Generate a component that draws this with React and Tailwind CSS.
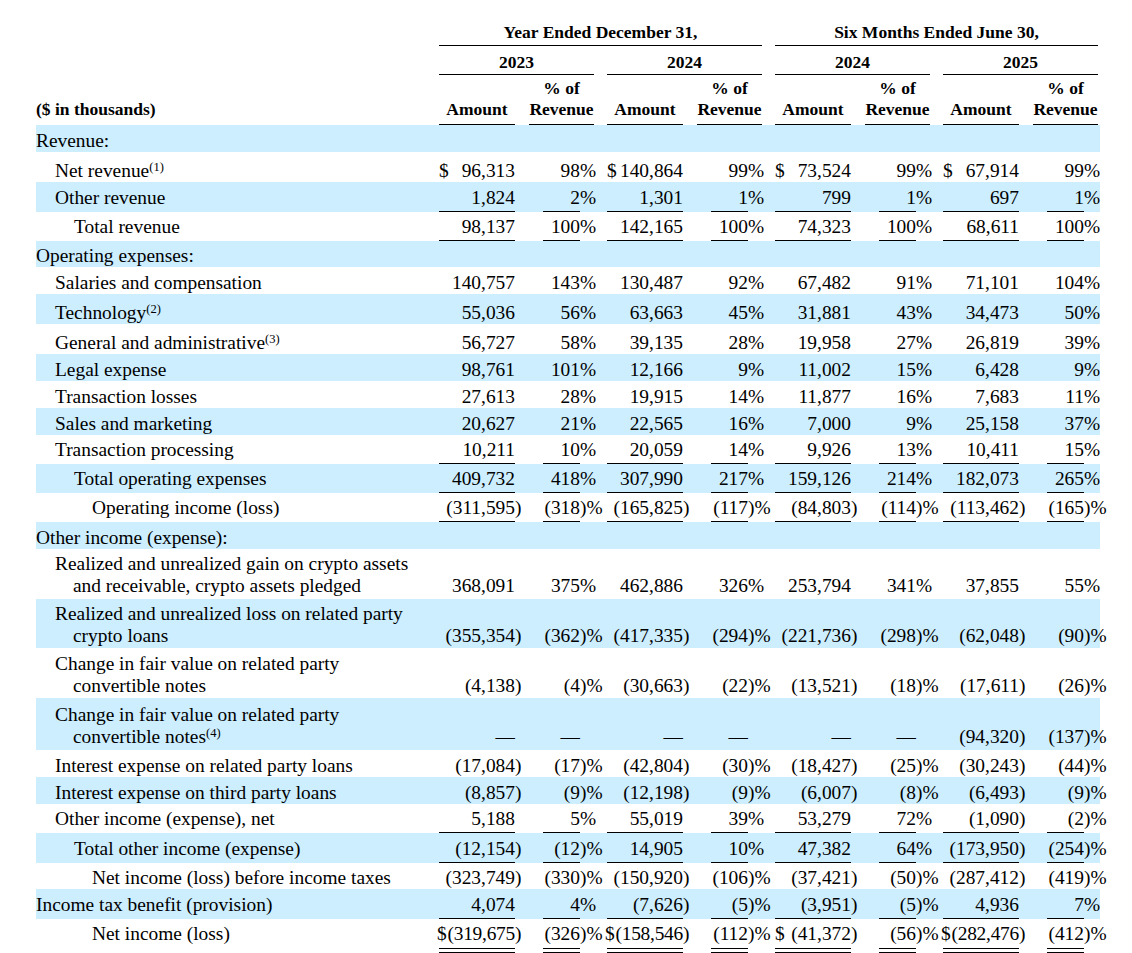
import React from "react";

const FONT = "font-['Liberation_Serif','Times_New_Roman',serif]";

const rows = [
  { label: ["Revenue:"], ind: 0, h: "h-[27px]", bg: true },
  { label: ["Net revenue"], sup: "(1)", ind: 1, h: "h-[30px]", v: ["$ 96,313", "98%", "$ 140,864", "99%", "$ 73,524", "99%", "$ 67,914", "99%"] },
  { label: ["Other revenue"], ind: 1, h: "h-[30px]", bg: true, ul: "s", v: ["1,824", "2%", "1,301", "1%", "799", "1%", "697", "1%"] },
  { label: ["Total revenue"], ind: 2, h: "h-[29px]", ul: "s", v: ["98,137", "100%", "142,165", "100%", "74,323", "100%", "68,611", "100%"] },
  { label: ["Operating expenses:"], ind: 0, h: "h-[26px]", bg: true },
  { label: ["Salaries and compensation"], ind: 1, h: "h-[27px]", v: ["140,757", "143%", "130,487", "92%", "67,482", "91%", "71,101", "104%"] },
  { label: ["Technology"], sup: "(2)", ind: 1, h: "h-[30px]", bg: true, v: ["55,036", "56%", "63,663", "45%", "31,881", "43%", "34,473", "50%"] },
  { label: ["General and administrative"], sup: "(3)", ind: 1, h: "h-[30px]", v: ["56,727", "58%", "39,135", "28%", "19,958", "27%", "26,819", "39%"] },
  { label: ["Legal expense"], ind: 1, h: "h-[27px]", bg: true, v: ["98,761", "101%", "12,166", "9%", "11,002", "15%", "6,428", "9%"] },
  { label: ["Transaction losses"], ind: 1, h: "h-[27px]", v: ["27,613", "28%", "19,915", "14%", "11,877", "16%", "7,683", "11%"] },
  { label: ["Sales and marketing"], ind: 1, h: "h-[27px]", bg: true, v: ["20,627", "21%", "22,565", "16%", "7,000", "9%", "25,158", "37%"] },
  { label: ["Transaction processing"], ind: 1, h: "h-[29px]", ul: "s", v: ["10,211", "10%", "20,059", "14%", "9,926", "13%", "10,411", "15%"] },
  { label: ["Total operating expenses"], ind: 2, h: "h-[29px]", bg: true, ul: "s", v: ["409,732", "418%", "307,990", "217%", "159,126", "214%", "182,073", "265%"] },
  { label: ["Operating income (loss)"], ind: 3, h: "h-[29px]", ul: "s", v: ["(311,595)", "(318)%", "(165,825)", "(117)%", "(84,803)", "(114)%", "(113,462)", "(165)%"] },
  { label: ["Other income (expense):"], ind: 0, h: "h-[27px]", bg: true },
  { label: ["Realized and unrealized gain on crypto assets", "and receivable, crypto assets pledged"], ind: 1, h: "h-[50px]", pb: 2, v: ["368,091", "375%", "462,886", "326%", "253,794", "341%", "37,855", "55%"] },
  { label: ["Realized and unrealized loss on related party", "crypto loans"], ind: 1, h: "h-[49px]", pb: 1, bg: true, v: ["(355,354)", "(362)%", "(417,335)", "(294)%", "(221,736)", "(298)%", "(62,048)", "(90)%"] },
  { label: ["Change in fair value on related party", "convertible notes"], ind: 1, h: "h-[50px]", pb: 1, v: ["(4,138)", "(4)%", "(30,663)", "(22)%", "(13,521)", "(18)%", "(17,611)", "(26)%"] },
  { label: ["Change in fair value on related party", "convertible notes"], sup: "(4)", ind: 1, h: "h-[52px]", pb: 2, bg: true, v: ["—", "—", "—", "—", "—", "—", "(94,320)", "(137)%"] },
  { label: ["Interest expense on related party loans"], ind: 1, h: "h-[27px]", v: ["(17,084)", "(17)%", "(42,804)", "(30)%", "(18,427)", "(25)%", "(30,243)", "(44)%"] },
  { label: ["Interest expense on third party loans"], ind: 1, h: "h-[27px]", bg: true, v: ["(8,857)", "(9)%", "(12,198)", "(9)%", "(6,007)", "(8)%", "(6,493)", "(9)%"] },
  { label: ["Other income (expense), net"], ind: 1, h: "h-[29px]", ul: "s", v: ["5,188", "5%", "55,019", "39%", "53,279", "72%", "(1,090)", "(2)%"] },
  { label: ["Total other income (expense)"], ind: 2, h: "h-[30px]", bg: true, ul: "s", v: ["(12,154)", "(12)%", "14,905", "10%", "47,382", "64%", "(173,950)", "(254)%"] },
  { label: ["Net income (loss) before income taxes"], ind: 3, h: "h-[26px]", v: ["(323,749)", "(330)%", "(150,920)", "(106)%", "(37,421)", "(50)%", "(287,412)", "(419)%"] },
  { label: ["Income tax benefit (provision)"], ind: 0, h: "h-[30px]", bg: true, ul: "s", v: ["4,074", "4%", "(7,626)", "(5)%", "(3,951)", "(5)%", "4,936", "7%"] },
  { label: ["Net income (loss)"], ind: 3, h: "h-[34px]", ul: "d", v: ["$(319,675)", "(326)%", "$(158,546)", "(112)%", "$ (41,372)", "(56)%", "$(282,476)", "(412)%"] },
];

const IND = ["pl-0", "pl-[19px]", "pl-[38px]", "pl-[56px]"];
const PB = { 0: "pb-0", 1: "pb-[1px]", 2: "pb-[2px]" };

function parseAmt(s) {
  let d = false;
  let tight = false;
  let t = s;
  if (t.startsWith("$")) {
    d = true;
    tight = t[1] === "(";
    t = t.slice(1).trim();
  }
  let sfx = "";
  if (t.endsWith(")")) {
    sfx = ")";
    t = t.slice(0, -1);
  }
  return { d, v: t, sfx, tight };
}

function parsePct(s) {
  if (s.endsWith(")%")) return { v: s.slice(0, -2), sfx: ")%" };
  if (s.endsWith("%")) return { v: s.slice(0, -1), sfx: "%" };
  return { v: s, sfx: "" };
}

function UlCell({ w, ul, plain, children }) {
  if (ul === "s") {
    return (
      <div className={`${w} shrink-0 border-b border-black pb-[2px] leading-[22px]`}>
        {children}
      </div>
    );
  }
  if (ul === "d") {
    return (
      <div className={`${w} shrink-0`}>
        <div className="border-b border-black pb-[3px] leading-[22px]">{children}</div>
        <div className="mt-[3px] h-px bg-black" />
      </div>
    );
  }
  return <div className={`${w} shrink-0 leading-[22px] ${plain}`}>{children}</div>;
}

function Period({ amt, pct, ul, plain, last }) {
  const a = parseAmt(amt);
  const p = parsePct(pct);
  return (
    <>
      <UlCell w="w-[76px]" ul={ul} plain={plain}>
        <div className="flex justify-between whitespace-nowrap">
          <span className={a.tight ? "w-[4px] -ml-[2px] overflow-visible" : "w-[6px] overflow-visible"}>
            {a.d ? "$" : ""}
          </span>
          <span className={a.tight ? "tracking-[-0.25px]" : ""}>{a.v}</span>
        </div>
      </UlCell>
      <div className={`w-[14px] shrink-0 leading-[22px] whitespace-nowrap ${plain}`}>{a.sfx}</div>
      <div className={`w-[14px] shrink-0 leading-[22px] ${plain}`}>&nbsp;</div>
      <UlCell w="w-[37px]" ul={ul} plain={plain}>
        <div className="text-right whitespace-nowrap">{p.v}</div>
      </UlCell>
      <div
        className={`${last ? "w-[16px]" : "w-[27px]"} shrink-0 leading-[22px] whitespace-nowrap ${plain}`}
      >
        {p.sfx}
      </div>
    </>
  );
}

function DataRow({ r }) {
  const plain = r.ul === "s" ? "pb-[3px]" : r.ul === "d" ? "pb-[8px]" : PB[r.pb || 0];
  return (
    <div className={`flex items-end w-[1064px] ${r.h} ${r.bg ? "bg-[#cceeff]" : ""}`}>
      <div className={`w-[403px] shrink-0 leading-[22px] whitespace-nowrap ${IND[r.ind]} ${plain}`}>
        {r.label.map((l, i) => (
          <div key={i} className={i > 0 ? "pl-[18px]" : ""}>
            {l}
            {i === r.label.length - 1 && r.sup ? (
              <sup className="text-[12.5px]">{r.sup}</sup>
            ) : null}
          </div>
        ))}
      </div>
      {r.v
        ? [0, 1, 2, 3].map((k) => (
            <Period
              key={k}
              amt={r.v[k * 2]}
              pct={r.v[k * 2 + 1]}
              ul={r.ul}
              plain={plain}
              last={k === 3}
            />
          ))
        : null}
    </div>
  );
}

function Header() {
  const years = ["2023", "2024", "2024", "2025"];
  return (
    <div className="text-[17.5px] font-bold leading-[21px]">
      <div className="flex items-end h-[46px]">
        <div className="w-[403px] shrink-0" />
        <div className="w-[323px] shrink-0 text-center border-b border-black pb-[2px] whitespace-nowrap">
          Year Ended December 31,
        </div>
        <div className="w-[13px] shrink-0" />
        <div className="w-[323px] shrink-0 text-center border-b border-black pb-[2px] whitespace-nowrap">
          Six Months Ended June 30,
        </div>
      </div>
      <div className="flex items-end h-[29px]">
        <div className="w-[403px] shrink-0" />
        {years.map((y, i) => (
          <React.Fragment key={i}>
            <div className="w-[155px] shrink-0 text-center border-b border-black pb-[1px]">{y}</div>
            {i < 3 ? <div className="w-[13px] shrink-0" /> : null}
          </React.Fragment>
        ))}
      </div>
      <div className="flex items-end h-[50px]">
        <div className="w-[403px] shrink-0 pb-[5px] whitespace-nowrap">($ in thousands)</div>
        {years.map((y, i) => (
          <React.Fragment key={i}>
            <div className="w-[76px] shrink-0 text-center border-b border-black pb-[4px]">Amount</div>
            <div className="w-[14px] shrink-0" />
            <div className="w-[65px] shrink-0 text-center border-b border-black pb-[4px]">
              % of
              <br />
              Revenue
            </div>
            {i < 3 ? <div className="w-[13px] shrink-0" /> : null}
          </React.Fragment>
        ))}
      </div>
    </div>
  );
}

export default function App() {
  return (
    <div className={`${FONT} min-h-[953px] w-[1132px] bg-white text-black pl-[36px] overflow-hidden`}>
      <Header />
      <div className="text-[19.4px]">
        {rows.map((r, i) => (
          <DataRow key={i} r={r} />
        ))}
      </div>
    </div>
  );
}
